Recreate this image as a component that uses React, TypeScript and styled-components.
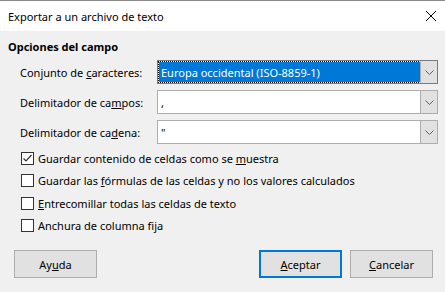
import React from "react";
import styled, { createGlobalStyle } from "styled-components";

const Global = createGlobalStyle`
  html, body { margin: 0; padding: 0; background: #f0f0f0; }
  body { font-family: "Segoe UI", "Noto Sans", "Liberation Sans", sans-serif; font-size: 11px; color: #000; }
`;

const Window = styled.div`
  width: 445px;
  height: 292px;
  display: flex;
  flex-direction: column;
  background: #f0f0f0;
  border-top: 1px solid #8a8a8a;
  box-sizing: border-box;
`;

const TitleBar = styled.div`
  height: 30px;
  background: #fff;
  display: flex;
  align-items: center;
  justify-content: space-between;
  padding: 0 8px;
  font-size: 11px;
`;

const Body = styled.div`
  flex: 1;
  display: flex;
  flex-direction: column;
  padding: 8px 7px 14px 8px;
`;

const Heading = styled.div`
  font-weight: bold;
  height: 16px;
  line-height: 16px;
`;

const Fields = styled.div`
  display: flex;
  flex-direction: column;
  gap: 6px;
  padding: 5px 0 0 12px;
`;

const FieldRow = styled.div`
  display: grid;
  grid-template-columns: 137px 281px;
  align-items: center;
  height: 24px;
`;

const Combo = styled.div<{ $focused?: boolean }>`
  height: 24px;
  box-sizing: border-box;
  border: 1px solid ${(p) => (p.$focused ? "#7a7a7a" : "#adadad")};
  background: #fff;
  display: flex;
`;

const ComboValue = styled.div<{ $focused?: boolean }>`
  flex: 1;
  display: flex;
  align-items: center;
  padding-left: 2px;
  margin: 1px 0 1px 1px;
  background: ${(p) => (p.$focused ? "#0078d7" : "transparent")};
  color: ${(p) => (p.$focused ? "#fff" : "#000")};
  outline: ${(p) => (p.$focused ? "1px dotted #000" : "none")};
  outline-offset: 0;
`;

const ComboButton = styled.div`
  width: 16px;
  border-left: 1px solid #adadad;
  background: #e1e1e1;
  display: flex;
  align-items: center;
  justify-content: center;
`;

const Checks = styled.div`
  display: flex;
  flex-direction: column;
  padding: 3px 0 0 13px;
`;

const CheckRow = styled.div`
  display: flex;
  align-items: center;
  gap: 4px;
  height: 22.5px;
`;

const Box = styled.div`
  width: 13px;
  height: 13px;
  box-sizing: border-box;
  border: 1px solid #333;
  background: #fff;
  display: flex;
  align-items: center;
  justify-content: center;
`;

const Buttons = styled.div`
  margin-top: auto;
  display: flex;
  gap: 8px;
  padding: 0 5px 0 6px;
`;

const Spacer = styled.div`
  flex: 1;
`;

const Button = styled.div<{ $default?: boolean }>`
  width: 83px;
  height: 28px;
  box-sizing: border-box;
  border: ${(p) => (p.$default ? "2px solid #0078d7" : "1px solid #adadad")};
  background: #e1e1e1;
  display: flex;
  align-items: center;
  justify-content: center;
`;

const Chevron = () => (
  <svg width="9" height="5" viewBox="0 0 9 5">
    <path d="M0.5 0.5 L4.5 4.5 L8.5 0.5" fill="none" stroke="#606060" strokeWidth="1" />
  </svg>
);

const Check = () => (
  <svg width="11" height="11" viewBox="0 0 11 11">
    <path d="M1.5 5.5 L4 8 L9.5 2" fill="none" stroke="#333" strokeWidth="1.2" />
  </svg>
);

const Close = () => (
  <svg width="12" height="12" viewBox="0 0 12 12">
    <path d="M1 1 L11 11 M11 1 L1 11" stroke="#000" strokeWidth="1" />
  </svg>
);

const fields = [
  { label: <>Conjunto de <u>c</u>aracteres:</>, value: "Europa occidental (ISO-8859-1)", focused: true },
  { label: <>Delimitador de ca<u>m</u>pos:</>, value: ",", focused: false },
  { label: <>Delimitador de ca<u>d</u>ena:</>, value: "\"", focused: false },
];

const checks = [
  { label: <>Guardar contenido de celdas como se <u>m</u>uestra</>, checked: true },
  { label: <>Guardar las <u>f</u>órmulas de las celdas y no los valores calculados</>, checked: false },
  { label: <><u>E</u>ntrecomillar todas las celdas de texto</>, checked: false },
  { label: <>Anchura de columna fija</>, checked: false },
];

export default function App() {
  return (
    <>
      <Global />
      <Window>
        <TitleBar>
          <span>Exportar a un archivo de texto</span>
          <Close />
        </TitleBar>
        <Body>
          <Heading>Opciones del campo</Heading>
          <Fields>
            {fields.map((f, i) => (
              <FieldRow key={i}>
                <span>{f.label}</span>
                <Combo $focused={f.focused}>
                  <ComboValue $focused={f.focused}>{f.value}</ComboValue>
                  <ComboButton>
                    <Chevron />
                  </ComboButton>
                </Combo>
              </FieldRow>
            ))}
          </Fields>
          <Checks>
            {checks.map((c, i) => (
              <CheckRow key={i}>
                <Box>{c.checked && <Check />}</Box>
                <span>{c.label}</span>
              </CheckRow>
            ))}
          </Checks>
          <Buttons>
            <Button>Ay<u>u</u>da</Button>
            <Spacer />
            <Button $default><u>A</u>ceptar</Button>
            <Button><u>C</u>ancelar</Button>
          </Buttons>
        </Body>
      </Window>
    </>
  );
}
